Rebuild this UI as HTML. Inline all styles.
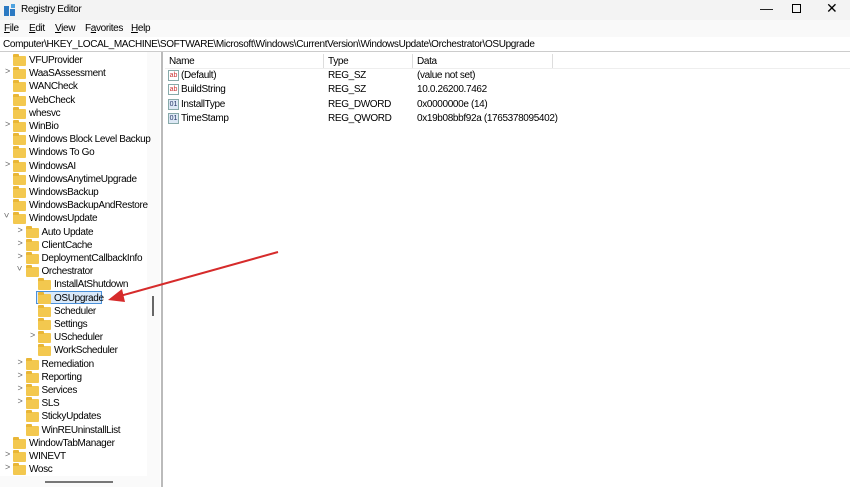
<!DOCTYPE html><html><head><style>
*{margin:0;padding:0;box-sizing:border-box}
body{width:850px;height:487px;background:#fff;font-family:"Liberation Sans",sans-serif;font-size:10px;letter-spacing:-0.35px;color:#000;position:relative;overflow:hidden}
.a{position:absolute;white-space:nowrap}
.f{position:absolute;width:13px;height:10px;background:#f3c84f;border-radius:1px}
.f:before{content:"";position:absolute;left:0;top:-2px;width:6px;height:3px;background:#e9b636;border-radius:1px 1px 0 0}
.c{position:absolute;font-size:9px;color:#666}
.ic{position:absolute;width:11px;height:11px;border:1px solid #8aa;font-size:7px;line-height:9px;text-align:center;color:#c33;background:#fff;letter-spacing:0}
.ic.b{color:#236;background:#dde8f5}
</style></head><body>
<div class="a" style="left:0;top:0;width:850px;height:20px;background:#f3f3f3"></div>
<svg class="a" style="left:4px;top:4px" width="12" height="12"><rect x="0" y="2" width="5" height="10" fill="#2b79c2"/><rect x="6" y="5" width="5" height="7" fill="#2b79c2"/><rect x="7" y="0" width="4" height="4" fill="#4fa3e0"/></svg>
<div class="a" style="left:21px;top:4px">Registry Editor</div>
<div class="a" style="left:760px;top:1px;font-size:13px">—</div>
<div class="a" style="left:792px;top:4px;width:9px;height:9px;border:1px solid #000"></div>
<div class="a" style="left:826px;top:0px;font-size:14px">✕</div>
<div class="a" style="left:0;top:20px;width:850px;height:17px;background:#f9f9f9"></div>
<div class="a" style="left:4px;top:23px"><u>F</u>ile</div>
<div class="a" style="left:29px;top:23px"><u>E</u>dit</div>
<div class="a" style="left:55px;top:23px"><u>V</u>iew</div>
<div class="a" style="left:85px;top:23px">F<u>a</u>vorites</div>
<div class="a" style="left:131px;top:23px"><u>H</u>elp</div>
<div class="a" style="left:0;top:37px;width:850px;height:15px;border-bottom:1px solid #ccc"></div>
<div class="a" style="left:3px;top:39px">Computer\HKEY_LOCAL_MACHINE\SOFTWARE\Microsoft\Windows\CurrentVersion\WindowsUpdate\Orchestrator\OSUpgrade</div>
<div class="a" style="left:147px;top:52px;width:13px;height:435px;background:#fafafa"></div>
<div class="a" style="left:152px;top:296px;width:2px;height:20px;background:#666"></div>
<div class="a" style="left:161px;top:52px;width:2px;height:435px;background:#bbb"></div>
<div class="a" style="left:0;top:476px;width:147px;height:11px;background:#fafafa"></div>
<div class="a" style="left:45px;top:481px;width:68px;height:2px;background:#777"></div>
<div id="t"></div>
<div class="a" style="left:165px;top:54px;width:685px;height:15px;border-bottom:1px solid #eee"></div>
<div class="a" style="left:323px;top:54px;width:1px;height:14px;background:#ddd"></div>
<div class="a" style="left:412px;top:54px;width:1px;height:14px;background:#ddd"></div>
<div class="a" style="left:552px;top:54px;width:1px;height:14px;background:#ddd"></div>
<div class="a" style="left:169px;top:56px">Name</div><div class="a" style="left:328px;top:56px">Type</div><div class="a" style="left:417px;top:56px">Data</div>
<div class="ic" style="left:168px;top:70px">ab</div><div class="a" style="left:181px;top:70px">(Default)</div><div class="a" style="left:328px;top:70px">REG_SZ</div><div class="a" style="left:417px;top:70px">(value not set)</div>
<div class="ic" style="left:168px;top:84px">ab</div><div class="a" style="left:181px;top:84px">BuildString</div><div class="a" style="left:328px;top:84px">REG_SZ</div><div class="a" style="left:417px;top:84px">10.0.26200.7462</div>
<div class="ic b" style="left:168px;top:99px">01</div><div class="a" style="left:181px;top:99px">InstallType</div><div class="a" style="left:328px;top:99px">REG_DWORD</div><div class="a" style="left:417px;top:99px">0x0000000e (14)</div>
<div class="ic b" style="left:168px;top:113px">01</div><div class="a" style="left:181px;top:113px">TimeStamp</div><div class="a" style="left:328px;top:113px">REG_QWORD</div><div class="a" style="left:417px;top:113px">0x19b08bbf92a (1765378095402)</div>
<svg class="a" style="left:0;top:0" width="850" height="487"><line x1="278" y1="252" x2="120" y2="296" stroke="#d62b2b" stroke-width="2"/><polygon points="108,300 122,289 125,302" fill="#d62b2b"/></svg>
<script>
var items=[[1,0,"VFUProvider"],[1,1,"WaaSAssessment"],[1,0,"WANCheck"],[1,0,"WebCheck"],[1,0,"whesvc"],[1,1,"WinBio"],[1,0,"Windows Block Level Backup"],[1,0,"Windows To Go"],[1,1,"WindowsAI"],[1,0,"WindowsAnytimeUpgrade"],[1,0,"WindowsBackup"],[1,0,"WindowsBackupAndRestore"],[1,2,"WindowsUpdate"],[2,1,"Auto Update"],[2,1,"ClientCache"],[2,1,"DeploymentCallbackInfo"],[2,2,"Orchestrator"],[3,0,"InstallAtShutdown"],[3,3,"OSUpgrade"],[3,0,"Scheduler"],[3,0,"Settings"],[3,1,"UScheduler"],[3,0,"WorkScheduler"],[2,1,"Remediation"],[2,1,"Reporting"],[2,1,"Services"],[2,1,"SLS"],[2,0,"StickyUpdates"],[2,0,"WinREUninstallList"],[1,0,"WindowTabManager"],[1,1,"WINEVT"],[1,1,"Wosc"]];
var h="";items.forEach(function(it,i){var y=54+i*13.2,l=it[0],fx=13+(l-1)*12.5,tx=fx+16;
if(it[1]==1)h+='<div class="c" style="left:'+(fx-8)+'px;top:'+(y-1)+'px">&gt;</div>';
if(it[1]==2)h+='<div class="c" style="left:'+(fx-9)+'px;top:'+(y-2)+'px;transform:rotate(90deg)">&gt;</div>';
if(it[1]==3)h+='<div class="a" style="left:'+(fx-2)+'px;top:'+(y-1)+'px;width:66px;height:13px;border:1px solid #4a90d9;background:#d9e9fa"></div>';
h+='<div class="f" style="left:'+fx+'px;top:'+(y+2)+'px"></div>';
h+='<div class="a" style="left:'+tx+'px;top:'+(y+1)+'px">'+it[2]+'</div>';});
document.getElementById("t").innerHTML=h;
</script>
</body></html>
